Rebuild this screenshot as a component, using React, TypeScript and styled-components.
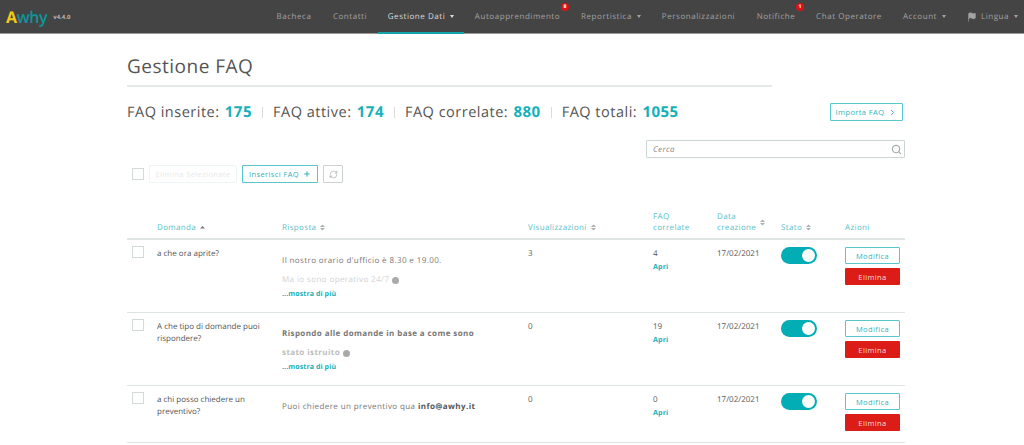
import React from "react";
import styled, { createGlobalStyle } from "styled-components";
import { ChevronRight, Flag, Plus, RefreshCw, Search } from "lucide-react";

const Global = createGlobalStyle`
  html, body { margin: 0; padding: 0; background: #fff; overflow: hidden; }
  body { font-family: "Open Sans", "Liberation Sans", sans-serif; color: #555; text-rendering: geometricPrecision; }
  * { box-sizing: border-box; }
`;

const TEAL = "#14b1ba";
const COLS = "30px 125px 246px 125px 64px 64px 64px 60px";

const Header = styled.header`
  height: 34px;
  background: #444;
  border-bottom: 1px solid #999;
  display: flex;
  align-items: stretch;
  justify-content: space-between;
`;
const Brand = styled.div`
  display: flex;
  align-items: center;
  padding-left: 6px;
  gap: 6px;
`;
const Logo = styled.span`
  font-size: 16px;
  font-weight: 600;
  letter-spacing: -0.4px;
  color: #0e959b;
  line-height: 1;
  b { color: #f5c916; font-weight: 700; }
`;
const Version = styled.span`
  font-size: 6px;
  font-weight: 700;
  color: #b5b5b5;
`;
const Nav = styled.nav`
  display: flex;
  align-items: stretch;
`;
const NavItem = styled.a<{ $active?: boolean; $w: number; $inset?: number }>`
  position: relative;
  width: ${(p) => p.$w}px;
  display: flex;
  align-items: center;
  justify-content: center;
  gap: 4px;
  font-size: 8px;
  letter-spacing: 0.55px;
  white-space: nowrap;
  color: ${(p) => (p.$active ? "#ddd" : "#a3a3a3")};
  border-bottom: 2px solid ${(p) => (p.$active ? "#10a5a8" : "transparent")};
  margin-bottom: -1px;
  padding: 1px 0 0 ${(p) => p.$inset ?? 0}px;
`;
const Caret = styled.i`
  width: 0;
  height: 0;
  border-left: 2.5px solid transparent;
  border-right: 2.5px solid transparent;
  border-top: 3px solid currentColor;
  margin-left: 1px;
`;
const Badge = styled.span`
  position: absolute;
  top: 3px;
  right: 2px;
  width: 8px;
  height: 8px;
  border-radius: 50%;
  background: #d9131b;
  color: #fff;
  font-size: 5px;
  font-weight: 700;
  line-height: 8px;
  text-align: center;
  letter-spacing: 0;
`;

const Main = styled.main`
  width: 778px;
  margin-left: 127px;
`;
const Title = styled.h1`
  width: 645px;
  margin: 0;
  padding: 18px 0 5px;
  height: 53px;
  border-bottom: 2px solid #e4eaea;
  font-size: 19px;
  line-height: 28px;
  font-weight: 400;
  letter-spacing: 0.5px;
  color: #555;
`;
const StatsRow = styled.div`
  height: 18px;
  margin-top: 16px;
  display: flex;
  align-items: center;
  justify-content: space-between;
  padding-right: 2px;
`;
const Stats = styled.div`
  display: flex;
  align-items: center;
  font-size: 14.5px;
  letter-spacing: 0.5px;
  color: #555;
`;
const Stat = styled.span`
  padding-right: 10px;
  line-height: 11px;
  & + & {
    padding-left: 10px;
    border-left: 1px solid #d8dcdc;
  }
  strong { color: ${TEAL}; font-weight: 700; font-size: 15px; margin-left: 1px; }
`;
const OutlineButton = styled.button<{ $faded?: boolean }>`
  height: 18px;
  display: inline-flex;
  align-items: center;
  justify-content: center;
  gap: 4px;
  background: #fff;
  border: 1px solid ${(p) => (p.$faded ? "#eef5f5" : "#58c6cb")};
  border-radius: 1px;
  padding: 0 4px;
  font-family: inherit;
  font-size: 7.5px;
  letter-spacing: 0.4px;
  color: ${(p) => (p.$faded ? "#e6e9e9" : "#33b3ba")};
  white-space: nowrap;
  svg { flex: none; }
`;
const ImportButton = styled(OutlineButton)`
  width: 73px;
`;
const SearchBox = styled.div`
  width: 259px;
  height: 18px;
  margin: 19px 0 0 519px;
  border: 1px solid #ccd5d5;
  border-radius: 1px;
  display: flex;
  align-items: center;
  justify-content: space-between;
  padding: 0 2px 0 6px;
  font-size: 8px;
  font-style: italic;
  letter-spacing: 0.4px;
  color: #888;
  svg { color: #a5acac; }
`;
const Toolbar = styled.div`
  height: 18px;
  margin-top: 7px;
  padding-left: 5px;
  display: flex;
  align-items: center;
  gap: 5px;
`;
const Check = styled.span`
  display: block;
  width: 12px;
  height: 12px;
  border: 1px solid #d3d8d8;
  background: #fff;
`;
const DeleteSelected = styled(OutlineButton)`
  width: 88px;
`;
const InsertButton = styled(OutlineButton)`
  width: 76px;
`;
const RefreshButton = styled(OutlineButton)`
  width: 20px;
  padding: 0;
  border-color: #ccd2d2;
  color: #999;
`;
const HeadRow = styled.div`
  display: grid;
  grid-template-columns: ${COLS};
  height: 57px;
  align-items: end;
  padding-bottom: 5px;
  border-bottom: 2px solid #dfe5e5;
`;
const Th = styled.div`
  display: flex;
  align-items: center;
  gap: 4px;
  font-size: 8px;
  line-height: 11px;
  letter-spacing: 0.35px;
  color: #58c1c7;
`;
const SortIcon = styled.svg`
  flex: none;
`;
const Row = styled.div<{ $h: number }>`
  display: grid;
  grid-template-columns: ${COLS};
  height: ${(p) => p.$h}px;
  border-bottom: 1px solid #dfe5e5;
  align-items: start;
  font-size: 8px;
  line-height: 11.5px;
  color: #555;
`;
const CheckCell = styled.div`
  padding: 6px 0 0 5px;
`;
const Cell = styled.div`
  padding-top: 8px;
`;
const QuestionCell = styled(Cell)`
  padding-right: 10px;
`;
const AnswerCell = styled.div`
  padding-top: 15px;
  letter-spacing: 0.4px;
  strong { font-weight: 700; color: #555; }
`;
const AnswerLine = styled.div<{ $bold?: boolean; $tone: string }>`
  height: 18.5px;
  line-height: 12px;
  font-weight: ${(p) => (p.$bold ? 700 : 400)};
  color: ${(p) => p.$tone};
  display: flex;
  gap: 3px;
`;
const Smile = styled.span`
  width: 7px;
  height: 7px;
  border-radius: 50%;
  margin-top: 3px;
  background: #aaa;
`;
const More = styled.a`
  display: block;
  font-size: 7px;
  line-height: 10px;
  margin-top: -2px;
  font-weight: 700;
  letter-spacing: 0.1px;
  color: ${TEAL};
`;
const Open = styled.a`
  display: block;
  margin-top: 3px;
  font-size: 7px;
  line-height: 10px;
  font-weight: 700;
  letter-spacing: 0.2px;
  color: ${TEAL};
`;
const Toggle = styled.span`
  display: flex;
  justify-content: flex-end;
  width: 36px;
  height: 17px;
  margin-top: 7px;
  padding: 2px;
  border-radius: 9px;
  background: #03adb5;
  &::after {
    content: "";
    width: 13px;
    height: 13px;
    border-radius: 50%;
    background: #fff;
  }
`;
const Actions = styled.div`
  padding-top: 7px;
  display: flex;
  flex-direction: column;
  gap: 4px;
  width: 55px;
`;
const EditButton = styled(OutlineButton)`
  width: 55px;
  height: 17px;
  padding: 0;
`;
const DeleteButton = styled.button`
  width: 55px;
  height: 17px;
  padding: 0;
  border: 0;
  border-radius: 1px;
  background: #dc1c17;
  color: #f8dcdc;
  font-family: inherit;
  font-size: 7.5px;
  letter-spacing: 0.4px;
`;

const Sort = ({ up }: { up?: boolean }) => (
  <SortIcon width="5" height="7" viewBox="0 0 5 7" fill="#aab0b0">
    {up ? (
      <path d="M0 4.5 L2.5 2 L5 4.5 Z" fill="#777" />
    ) : (
      <>
        <path d="M0 3 L2.5 0.5 L5 3 Z" />
        <path d="M0 4 L2.5 6.5 L5 4 Z" />
      </>
    )}
  </SortIcon>
);

const navItems = [
  { label: "Bacheca", w: 56 },
  { label: "Contatti", w: 56 },
  { label: "Gestione Dati", w: 86, caret: true, active: true },
  { label: "Autoapprendimento", w: 107, badge: "8" },
  { label: "Reportistica", w: 80, caret: true },
  { label: "Personalizzazioni", w: 95 },
  { label: "Notifiche", w: 60, badge: "1" },
  { label: "Chat Operatore", w: 86 },
  { label: "Account", w: 65, caret: true },
  { label: "Lingua", w: 67, caret: true, flag: true, inset: 4 },
];

type Item = {
  q: string;
  views: number;
  linked: number;
  h: number;
  answer: React.ReactNode;
};

const items: Item[] = [
  {
    q: "a che ora aprite?",
    views: 3,
    linked: 4,
    h: 73,
    answer: (
      <>
        <AnswerLine $tone="#777">Il nostro orario d'ufficio è 8.30 e 19.00.</AnswerLine>
        <AnswerLine $tone="#d2d2d2">
          Ma io sono operativo 24/7 <Smile />
        </AnswerLine>
        <More>...mostra di più</More>
      </>
    ),
  },
  {
    q: "A che tipo di domande puoi rispondere?",
    views: 0,
    linked: 19,
    h: 73,
    answer: (
      <>
        <AnswerLine $bold $tone="#777">Rispondo alle domande in base a come sono</AnswerLine>
        <AnswerLine $bold $tone="#bdbdbd">
          stato istruito <Smile />
        </AnswerLine>
        <More>...mostra di più</More>
      </>
    ),
  },
  {
    q: "a chi posso chiedere un preventivo?",
    views: 0,
    linked: 0,
    h: 57,
    answer: (
      <AnswerLine $tone="#777">
        <span>
          Puoi chiedere un preventivo qua <strong>info@awhy.it</strong>
        </span>
      </AnswerLine>
    ),
  },
];

export default function App() {
  return (
    <>
      <Global />
      <Header>
        <Brand>
          <Logo>
            <b>A</b>why
          </Logo>
          <Version>v4.4.0</Version>
        </Brand>
        <Nav>
          {navItems.map((n) => (
            <NavItem key={n.label} $active={n.active} $w={n.w} $inset={n.inset}>
              {n.flag && <Flag size={10} fill="currentColor" strokeWidth={1.5} />}
              {n.label}
              {n.caret && <Caret />}
              {n.badge && <Badge>{n.badge}</Badge>}
            </NavItem>
          ))}
        </Nav>
      </Header>
      <Main>
        <Title>Gestione FAQ</Title>
        <StatsRow>
          <Stats>
            <Stat>FAQ inserite: <strong>175</strong></Stat>
            <Stat>FAQ attive: <strong>174</strong></Stat>
            <Stat>FAQ correlate: <strong>880</strong></Stat>
            <Stat>FAQ totali: <strong>1055</strong></Stat>
          </Stats>
          <ImportButton>
            Importa FAQ <ChevronRight size={9} strokeWidth={2.5} />
          </ImportButton>
        </StatsRow>
        <SearchBox>
          Cerca
          <Search size={11} strokeWidth={2.5} />
        </SearchBox>
        <Toolbar>
          <Check />
          <DeleteSelected $faded>Elimina Selezionate</DeleteSelected>
          <InsertButton>
            Inserisci FAQ <Plus size={8} strokeWidth={3} />
          </InsertButton>
          <RefreshButton>
            <RefreshCw size={9} strokeWidth={1.5} />
          </RefreshButton>
        </Toolbar>
        <HeadRow>
          <span />
          <Th>Domanda <Sort up /></Th>
          <Th>Risposta <Sort /></Th>
          <Th>Visualizzazioni <Sort /></Th>
          <Th>FAQ<br />correlate</Th>
          <Th>
            <span>Data<br />creazione</span>
            <Sort />
          </Th>
          <Th>Stato <Sort /></Th>
          <Th>Azioni</Th>
        </HeadRow>
        {items.map((it) => (
          <Row key={it.q} $h={it.h}>
            <CheckCell><Check /></CheckCell>
            <QuestionCell>{it.q}</QuestionCell>
            <AnswerCell>{it.answer}</AnswerCell>
            <Cell>{it.views}</Cell>
            <Cell>
              {it.linked}
              <Open>Apri</Open>
            </Cell>
            <Cell>17/02/2021</Cell>
            <div><Toggle /></div>
            <Actions>
              <EditButton>Modifica</EditButton>
              <DeleteButton>Elimina</DeleteButton>
            </Actions>
          </Row>
        ))}
      </Main>
    </>
  );
}
